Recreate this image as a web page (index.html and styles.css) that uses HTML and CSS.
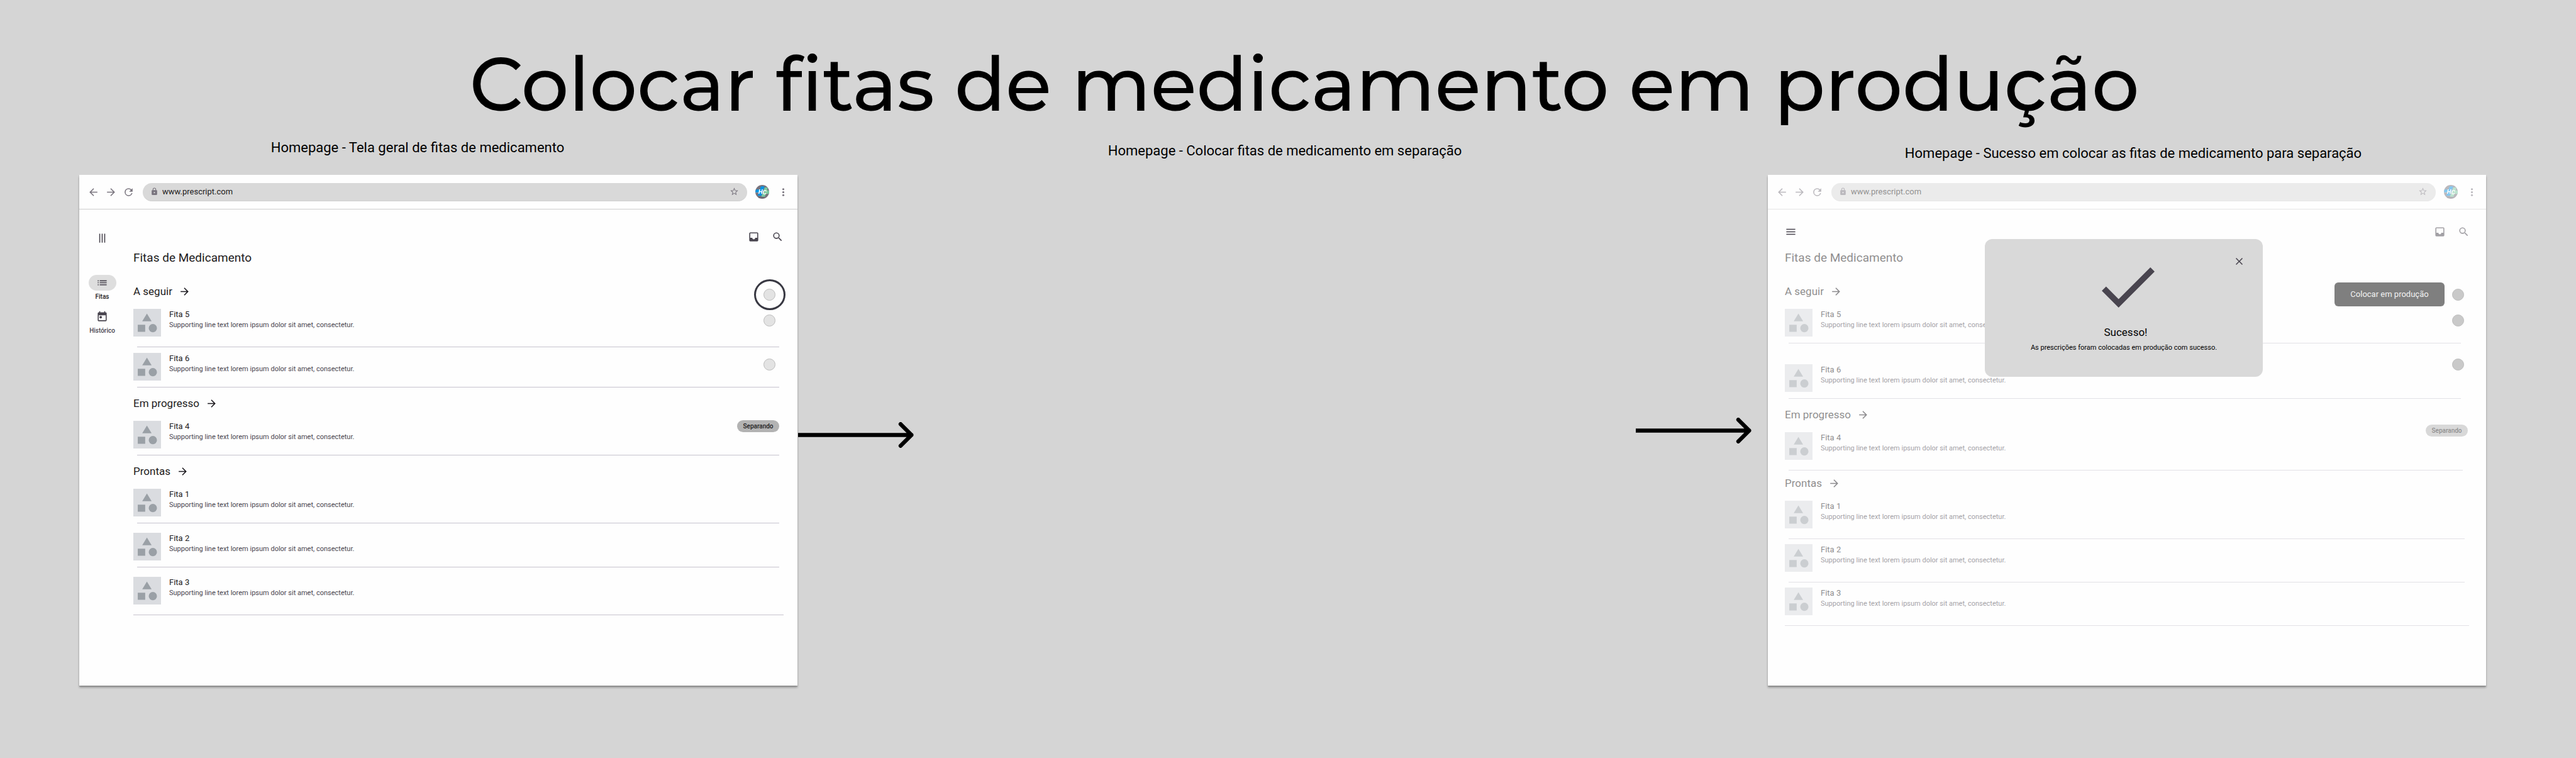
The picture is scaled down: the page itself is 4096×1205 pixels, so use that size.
FILE: index.html
```html
<!DOCTYPE html>
<html lang="pt-BR">
<head>
<meta charset="utf-8">
<title>Colocar fitas de medicamento em produção</title>
<link rel="stylesheet" href="styles.css">
</head>
<body>
<svg class="sprite" aria-hidden="true">
  <symbol id="back" viewBox="0 0 24 24"><path d="M20 11H7.83l5.59-5.59L12 4l-8 8 8 8 1.41-1.41L7.83 13H20v-2z"/></symbol>
  <symbol id="forward" viewBox="0 0 24 24"><path d="M12 4l-1.41 1.41L16.17 11H4v2h12.17l-5.58 5.59L12 20l8-8z"/></symbol>
  <symbol id="reload" viewBox="0 0 24 24"><path d="M17.65 6.35A7.96 7.96 0 0 0 12 4a8 8 0 1 0 7.73 10h-2.08A6 6 0 1 1 12 6c1.66 0 3.14.69 4.22 1.78L13 11h7V4l-2.35 2.35z"/></symbol>
  <symbol id="lock" viewBox="0 0 24 24"><path d="M18 8h-1V6A5 5 0 0 0 7 6v2H6a2 2 0 0 0-2 2v10c0 1.100.9 2 2 2h12a2 2 0 0 0 2-2V10a2 2 0 0 0-2-2zm-6 9a2 2 0 1 1 0-4 2 2 0 0 1 0 4zm3.100-9H8.900V6a3.100 3.100 0 0 1 6.200 0v2z"/></symbol>
  <symbol id="star" viewBox="0 0 24 24"><path d="M22 9.240l-7.190-.62L12 2 9.190 8.630 2 9.240l5.460 4.730L5.820 21 12 17.270 18.180 21l-1.630-7.030L22 9.240zM12 15.400l-3.760 2.270 1-4.280-3.320-2.880 4.380-.38L12 6.100l1.710 4.040 4.380.38-3.320 2.880 1 4.280L12 15.400z"/></symbol>
  <symbol id="dots" viewBox="0 0 24 24"><circle cx="12" cy="6" r="2"/><circle cx="12" cy="12" r="2"/><circle cx="12" cy="18" r="2"/></symbol>
  <symbol id="menu" viewBox="0 0 24 24"><path d="M3 18h18v-2H3v2zm0-5h18v-2H3v2zm0-7v2h18V6H3z"/></symbol>
  <symbol id="bars" viewBox="0 0 24 24"><path d="M6 3v18h2V3zm5 0v18h2V3zm5 0v18h2V3z"/></symbol>
  <symbol id="list" viewBox="0 0 24 24"><path d="M3 13h2v-2H3v2zm0 4h2v-2H3v2zm0-8h2V7H3v2zm4 4h14v-2H7v2zm0 4h14v-2H7v2zM7 7v2h14V7H7z"/></symbol>
  <symbol id="calendar" viewBox="0 0 24 24"><path d="M19 3h-1V1h-2v2H8V1H6v2H5a2 2 0 0 0-2 2v14a2 2 0 0 0 2 2h14a2 2 0 0 0 2-2V5a2 2 0 0 0-2-2zm0 16H5V9h14v10z"/><circle cx="9" cy="13" r="2.500"/></symbol>
  <symbol id="inbox" viewBox="0 0 24 24"><path d="M19 3H5a2 2 0 0 0-2 2v14a2 2 0 0 0 2 2h14a2 2 0 0 0 2-2V5a2 2 0 0 0-2-2zm0 11h-4a3 3 0 0 1-6 0H5V5h14v9z"/></symbol>
  <symbol id="search" viewBox="0 0 24 24"><path d="M15.500 14h-.79l-.28-.27A6.470 6.470 0 0 0 16 9.500 6.500 6.500 0 1 0 9.500 16c1.610 0 3.090-.59 4.230-1.570l.27.28v.79l5 4.990L20.490 19l-4.990-5zm-6 0a4.500 4.500 0 1 1 0-9 4.500 4.500 0 0 1 0 9z"/></symbol>
  <symbol id="close" viewBox="0 0 24 24"><path d="M19 6.410L17.590 5 12 10.590 6.410 5 5 6.410 10.590 12 5 17.590 6.410 19 12 13.410 17.590 19 19 17.590 13.410 12z"/></symbol>
  <symbol id="shapes" viewBox="0 0 56 56"><path d="M27.500 9.500L37 25H18zM9 32h15v14.500H9z"/><circle cx="39.500" cy="39" r="8.300"/></symbol>
  <symbol id="arrow" viewBox="0 0 232 52"><path d="M0 26H228M206 4l22 22-22 22" fill="none" stroke="#000" stroke-width="8" stroke-linecap="round" stroke-linejoin="round"/></symbol>
  <symbol id="avatar" viewBox="0 0 84 84">
    <circle cx="42" cy="42" r="42" fill="#77727c"/>
    <path d="M4 28h22l-5 18H0zM34 9h22L37 66H14z" fill="#0a93e2"/>
    <path d="M0 46h20" stroke="#a9bcc8" stroke-width="2"/>
    <path d="M57 15h18l-3 18h11l1 12-2 9H64l-6 18H36z" fill="#7ac8a0"/>
    <path d="M20 77h36" stroke="#5d5862" stroke-width="5" stroke-dasharray="5 2"/>
    <text x="18" y="53" class="mono">H</text><text x="44" y="57" class="mono">C</text>
  </symbol>
</svg>

<header class="title"><h1>Colocar fitas de medicamento em produção</h1></header>

<main class="board">
  <p class="caption caption-first">Homepage - Tela geral de fitas de medicamento</p>
  <p class="caption caption-second">Homepage - Colocar fitas de medicamento em separação</p>
  <p class="caption caption-third">Homepage - Sucesso em colocar as fitas de medicamento para separação</p>

  <section class="frame frame-first" aria-label="Tela geral">
    <div class="bar">
      <div class="bar-nav">
        <button class="icon-btn" aria-label="Voltar"><svg><use href="#back"/></svg></button>
        <button class="icon-btn" aria-label="Avançar"><svg><use href="#forward"/></svg></button>
        <button class="icon-btn" aria-label="Recarregar"><svg><use href="#reload"/></svg></button>
      </div>
      <div class="address">
        <svg class="lock"><use href="#lock"/></svg>
        <input type="text" value="www.prescript.com" aria-label="Endereço">
        <button class="icon-btn small" aria-label="Favoritar"><svg><use href="#star"/></svg></button>
      </div>
      <svg class="avatar"><use href="#avatar"/></svg>
      <button class="icon-btn" aria-label="Mais opções"><svg><use href="#dots"/></svg></button>
    </div>
    <div class="app">
      <nav class="rail">
        <button class="icon-btn dark" aria-label="Menu"><svg><use href="#bars"/></svg></button>
        <a class="rail-link active" href="#fitas"><span class="rail-icon"><svg><use href="#list"/></svg></span>Fitas</a>
        <a class="rail-link" href="#historico"><span class="rail-icon"><svg><use href="#calendar"/></svg></span>Histórico</a>
      </nav>
      <div class="content">
        <div class="toolbar">
          <button class="icon-btn dark push" aria-label="Caixa de entrada"><svg><use href="#inbox"/></svg></button>
          <button class="icon-btn dark" aria-label="Buscar"><svg><use href="#search"/></svg></button>
        </div>
        <h2>Fitas de Medicamento</h2>
        <section class="group">
          <div class="group-head">
            <h3>A seguir <svg><use href="#forward"/></svg></h3>
            <div class="actions"><span class="ringed"><input type="checkbox" class="dot" aria-label="Selecionar todas"></span></div>
          </div>
          <div class="item roomy">
            <svg class="thumb"><use href="#shapes"/></svg>
            <label class="text" for="a5"><b>Fita 5</b><span>Supporting line text lorem ipsum dolor sit amet, consectetur.</span></label>
            <input type="checkbox" class="dot" id="a5">
          </div>
          <div class="item next">
            <svg class="thumb"><use href="#shapes"/></svg>
            <label class="text" for="a6"><b>Fita 6</b><span>Supporting line text lorem ipsum dolor sit amet, consectetur.</span></label>
            <input type="checkbox" class="dot" id="a6">
          </div>
        </section>
        <section class="group">
          <div class="group-head"><h3>Em progresso <svg><use href="#forward"/></svg></h3></div>
          <div class="item">
            <svg class="thumb"><use href="#shapes"/></svg>
            <div class="text"><b>Fita 4</b><span>Supporting line text lorem ipsum dolor sit amet, consectetur.</span></div>
            <span class="badge">Separando</span>
          </div>
        </section>
        <section class="group">
          <div class="group-head"><h3>Prontas <svg><use href="#forward"/></svg></h3></div>
          <div class="item">
            <svg class="thumb"><use href="#shapes"/></svg>
            <div class="text"><b>Fita 1</b><span>Supporting line text lorem ipsum dolor sit amet, consectetur.</span></div>
          </div>
          <div class="item after">
            <svg class="thumb"><use href="#shapes"/></svg>
            <div class="text"><b>Fita 2</b><span>Supporting line text lorem ipsum dolor sit amet, consectetur.</span></div>
          </div>
          <div class="item after roomy last">
            <svg class="thumb"><use href="#shapes"/></svg>
            <div class="text"><b>Fita 3</b><span>Supporting line text lorem ipsum dolor sit amet, consectetur.</span></div>
          </div>
        </section>
      </div>
    </div>
  </section>

  <svg class="arrow arrow-first"><use href="#arrow"/></svg>
  <svg class="arrow arrow-second"><use href="#arrow"/></svg>

  <section class="frame frame-third faded" aria-label="Sucesso">
    <div class="bar">
      <div class="bar-nav">
        <button class="icon-btn" aria-label="Voltar"><svg><use href="#back"/></svg></button>
        <button class="icon-btn" aria-label="Avançar"><svg><use href="#forward"/></svg></button>
        <button class="icon-btn" aria-label="Recarregar"><svg><use href="#reload"/></svg></button>
      </div>
      <div class="address">
        <svg class="lock"><use href="#lock"/></svg>
        <input type="text" value="www.prescript.com" aria-label="Endereço">
        <button class="icon-btn small" aria-label="Favoritar"><svg><use href="#star"/></svg></button>
      </div>
      <svg class="avatar"><use href="#avatar"/></svg>
      <button class="icon-btn" aria-label="Mais opções"><svg><use href="#dots"/></svg></button>
    </div>
    <div class="app">
      <div class="content">
        <div class="toolbar">
          <button class="icon-btn dark menu" aria-label="Menu"><svg><use href="#menu"/></svg></button>
          <button class="icon-btn dark push" aria-label="Caixa de entrada"><svg><use href="#inbox"/></svg></button>
          <button class="icon-btn dark" aria-label="Buscar"><svg><use href="#search"/></svg></button>
        </div>
        <h2>Fitas de Medicamento</h2>
        <section class="group">
          <div class="group-head">
            <h3>A seguir <svg><use href="#forward"/></svg></h3>
            <div class="actions"><button class="produce">Colocar em produção</button><input type="checkbox" class="dot" aria-label="Selecionar todas"></div>
          </div>
          <div class="item">
            <svg class="thumb"><use href="#shapes"/></svg>
            <label class="text" for="b5"><b>Fita 5</b><span>Supporting line text lorem ipsum dolor sit amet, consectetur.</span></label>
            <input type="checkbox" class="dot" id="b5">
          </div>
          <div class="item distant">
            <svg class="thumb"><use href="#shapes"/></svg>
            <label class="text" for="b6"><b>Fita 6</b><span>Supporting line text lorem ipsum dolor sit amet, consectetur.</span></label>
            <input type="checkbox" class="dot" id="b6">
          </div>
        </section>
        <section class="group middle">
          <div class="group-head"><h3>Em progresso <svg><use href="#forward"/></svg></h3></div>
          <div class="item roomy">
            <svg class="thumb"><use href="#shapes"/></svg>
            <div class="text"><b>Fita 4</b><span>Supporting line text lorem ipsum dolor sit amet, consectetur.</span></div>
            <span class="badge">Separando</span>
          </div>
        </section>
        <section class="group done">
          <div class="group-head"><h3>Prontas <svg><use href="#forward"/></svg></h3></div>
          <div class="item roomy">
            <svg class="thumb"><use href="#shapes"/></svg>
            <div class="text"><b>Fita 1</b><span>Supporting line text lorem ipsum dolor sit amet, consectetur.</span></div>
          </div>
          <div class="item close roomy">
            <svg class="thumb"><use href="#shapes"/></svg>
            <div class="text"><b>Fita 2</b><span>Supporting line text lorem ipsum dolor sit amet, consectetur.</span></div>
          </div>
          <div class="item close roomy last">
            <svg class="thumb"><use href="#shapes"/></svg>
            <div class="text"><b>Fita 3</b><span>Supporting line text lorem ipsum dolor sit amet, consectetur.</span></div>
          </div>
        </section>
      </div>
    </div>
    <div class="dialog" role="dialog" aria-labelledby="ok-title">
      <button class="icon-btn dark dismiss" aria-label="Fechar"><svg><use href="#close"/></svg></button>
      <svg class="check" viewBox="3.410 5.590 17.590 13.410" aria-hidden="true"><path d="M9 16.170L4.830 12l-1.420 1.410L9 19 21 7l-1.410-1.410z"/></svg>
      <h3 id="ok-title">Sucesso!</h3>
      <p>As prescrições foram colocadas em produção com sucesso.</p>
    </div>
  </section>
</main>
</body>
</html>
```
FILE: styles.css
```css
* { box-sizing: border-box; }

body {
  margin: 0;
  min-height: 100vh;
  background: #d5d5d5;
  color: #1d1b20;
  font-family: Roboto, "Liberation Sans", sans-serif;
}

h1, h2, h3, p { margin: 0; font-weight: 400; }
svg { display: block; fill: currentColor; }
.sprite { display: none; }
.mono { font: italic 700 38px Roboto, sans-serif; fill: #fff; }

.title { padding: 64px 0 18px 52px; text-align: center; }
.title h1 {
  font-family: Montserrat, Inter, sans-serif;
  font-size: 119px;
  font-weight: 500;
  line-height: 140px;
  color: #000;
}

/* Three screens with an arrow column between each pair */
.board {
  display: grid;
  grid-template-columns: minmax(0, 1fr) 186px minmax(0, 1fr) 215px minmax(0, 1fr);
  grid-template-rows: 35px auto;
  row-gap: 21px;
  padding: 0 143px 115px 126px;
}
.caption {
  font-size: 22px;
  line-height: 26px;
  color: #000;
  text-align: center;
  grid-row: 1;
}
.caption-first { grid-column: 1; align-self: start; padding-right: 66px; }
.caption-second { grid-column: 3; align-self: center; padding-left: 36px; }
.caption-third { grid-column: 5; align-self: end; padding-left: 20px; }

.arrow { width: 184px; height: 41px; grid-row: 2; align-self: center; }
.arrow-first { grid-column: 2; margin: 14px 0 0 1px; }
.arrow-second { grid-column: 4; margin-left: 5px; }

.frame {
  position: relative;
  grid-row: 2;
  background: #fefefe;
  box-shadow: 0 3px 3px rgba(0, 0, 0, .3), 0 1px 1px rgba(0, 0, 0, .15);
}
.frame-first { grid-column: 1; }
.frame-third { grid-column: 5; }

/* Browser bar */
.bar {
  display: flex;
  align-items: center;
  gap: 13px;
  height: 55px;
  padding: 0 13px;
  border-bottom: 1px solid #ccc;
  color: #79747e;
}
.bar-nav { display: flex; gap: 9px; }
.icon-btn {
  display: grid;
  place-items: center;
  flex: none;
  width: 19px;
  height: 19px;
  padding: 0;
  border: 0;
  background: none;
  color: inherit;
}
.icon-btn svg { width: 19px; height: 19px; }
.small svg { width: 15px; height: 15px; }
.dark { color: #49454f; }
.address {
  flex: 1;
  display: flex;
  align-items: center;
  height: 29px;
  padding: 0 11px 0 12px;
  border-radius: 15px;
  background: #d9d9d9;
  border-bottom: 1px solid #cfcfcf;
}
.lock { width: 13px; height: 13px; }
.address input {
  flex: 1;
  min-width: 0;
  margin: 0;
  padding: 0 0 0 6px;
  border: 0;
  background: none;
  color: #1d1b20;
  font: 13px/16px Roboto, "Liberation Sans", sans-serif;
}
.avatar { width: 22px; height: 22px; }

/* App shell */
.app { display: flex; }
.rail {
  display: flex;
  flex-direction: column;
  align-items: center;
  gap: 13px;
  width: 73px;
  padding-top: 36px;
}
.rail .icon-btn { margin-bottom: 36px; }
.rail-link {
  display: flex;
  flex-direction: column;
  align-items: center;
  gap: 4px;
  font-size: 10px;
  font-weight: 500;
  line-height: 12px;
  color: #49454f;
  text-decoration: none;
}
.rail-icon {
  display: grid;
  place-items: center;
  width: 44px;
  height: 25px;
  border-radius: 13px;
  color: #49454f;
}
.rail-icon svg { width: 19px; height: 19px; }
.active { color: #1d1b20; }
.active .rail-icon { background: #dedede; }

.content { flex: 1; padding: 34px 0 112px 13px; }
.toolbar { display: flex; gap: 19px; padding: 0 22px 11px 0; }
.push { margin-left: auto; }
.content h2 { font-size: 19px; line-height: 26px; padding-bottom: 15px; }

.group { padding-right: 29px; --rule-end: 0px; }
.group-head {
  display: flex;
  align-items: flex-start;
  justify-content: space-between;
  height: 53px;
}
.group-head h3 {
  display: flex;
  align-items: center;
  gap: 10px;
  margin-top: 14px;
  font-size: 17px;
  line-height: 22px;
}
.group-head h3 svg { width: 19px; height: 19px; }
.actions {
  display: flex;
  align-items: center;
  gap: 12px;
  height: 38px;
  margin: 11px 6px 0 0;
}
.actions .dot { margin: 0; }

.item {
  display: grid;
  grid-template-columns: 44px 1fr auto;
  column-gap: 13px;
  align-items: start;
}
.item::after {
  content: "";
  grid-column: 1 / -1;
  height: 1px;
  margin: 10px var(--rule-end) 0 6px;
  background: #c6c3ce;
}
.roomy::after { margin-top: 16px; }
.next { padding-top: 9px; }
.after { padding-top: 15px; }
.last::after { margin-left: 0; margin-right: -7px; }

.thumb { width: 44px; height: 44px; background: #dadce0; color: #9aa0a6; }
.text { display: flex; flex-direction: column; }
.text b { font-size: 13px; font-weight: 400; line-height: 18px; }
.text span { font-size: 11px; line-height: 16px; color: #49454f; }

.dot {
  appearance: none;
  width: 19px;
  height: 19px;
  margin: 9px 6px 0 0;
  border: 1px solid #bdbdbd;
  border-radius: 50%;
  background: #e3e3e3;
}
.ringed { position: relative; display: block; height: 19px; }
.ringed .dot { display: block; }
.ringed::after {
  content: "";
  position: absolute;
  inset: -15px -16px -15px -15px;
  border: 3px solid #383842;
  border-radius: 50%;
}
.badge {
  width: 67px;
  margin-top: -1px;
  border-radius: 10px;
  background: #b3b3b3;
  font-size: 10px;
  font-weight: 500;
  line-height: 19px;
  text-align: center;
}

/* Screen behind the success dialog */
.faded .bar,
.faded .push,
.faded .push + .icon-btn,
.faded h2,
.faded .group-head h3,
.faded .thumb,
.faded .text,
.faded .badge,
.faded .item::after { opacity: .5; }
.faded .content { padding: 26px 0 0 27px; }
.faded .toolbar { padding: 0 26px 19px 0; }
.faded .group { --rule-end: 11px; }
.faded .middle { --rule-end: 8px; }
.faded .done { --rule-end: 5px; }
.faded .dot { background: #c9c9c9; border-color: #bdbdbd; }
.faded .last::after { margin-right: -2px; }
.faded .badge { margin-top: -12px; }
.distant .thumb, .distant .text { margin-top: 33px; }
.distant .dot { margin-top: 24px; }
.close { padding-top: 8px; }
.faded .done .group-head { height: 48px; }
.faded .done h3 { margin-top: 9px; }
.produce {
  width: 175px;
  height: 38px;
  padding: 0;
  border: 0;
  border-radius: 6px;
  background: #7f7f7f;
  color: #f2f2f2;
  font: 13px/18px Roboto, "Liberation Sans", sans-serif;
}

.dialog {
  position: absolute;
  top: 102px;
  left: 345px;
  right: 355px;
  display: flex;
  flex-direction: column;
  align-items: center;
  padding: 26px 28px 38px;
  border-radius: 12px;
  background: #d9d9d9;
  color: #000;
}
.dismiss { align-self: flex-end; }
.check { width: 86px; height: 64px; margin: 0 0 28px 14px; color: #49454f; }
.dialog h3 { font-size: 17px; line-height: 22px; margin: 0 0 6px 6px; }
.dialog p { font-size: 11px; line-height: 16px; }
```
